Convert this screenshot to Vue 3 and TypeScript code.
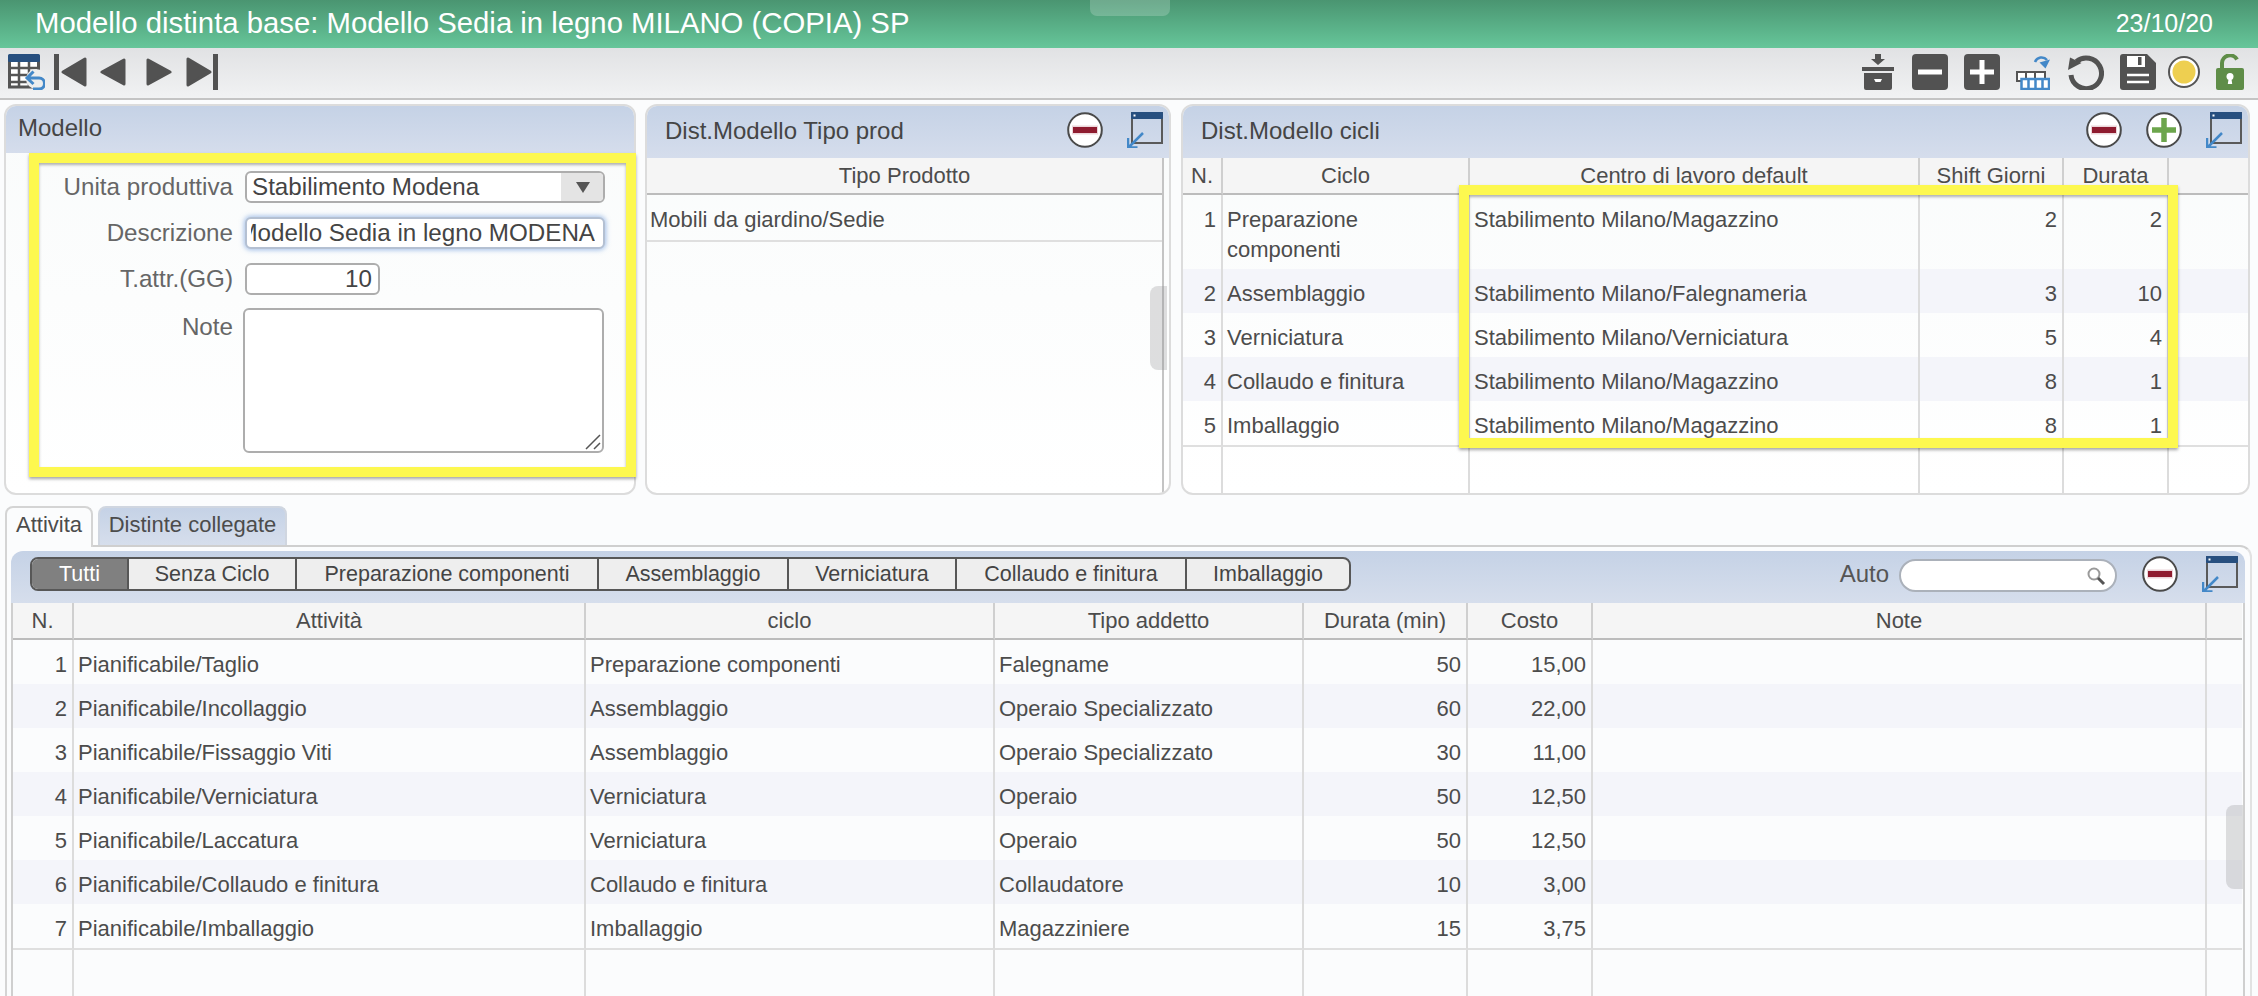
<template>
  <div class="page">
    <svg class="defs" width="0" height="0">
      <symbol id="minus-round" viewBox="0 0 36 36">
        <circle cx="18" cy="18" r="16.8" fill="#fff" stroke="#4a4a4a" stroke-width="2" />
        <rect x="5" y="13.500" width="26" height="9" fill="#ecd6da" />
        <rect x="6" y="15" width="24" height="6" fill="#8e1b2f" />
      </symbol>
      <symbol id="plus-round" viewBox="0 0 36 36">
        <circle cx="18" cy="18" r="16.8" fill="#fff" stroke="#4a4a4a" stroke-width="2" />
        <path d="M18 6v24M6 18h24" stroke="#6ca54c" stroke-width="5.500" fill="none" />
      </symbol>
      <symbol id="window" viewBox="0 0 36 36">
        <rect x="5" y="1" width="30" height="30" fill="none" stroke="#5a5a5a" stroke-width="2" />
        <rect x="4" y="0" width="32" height="7" rx="1" fill="#274f7f" />
        <rect x="6.500" y="2.500" width="2" height="2" fill="#fff" />
        <path d="M16 21 2 35M1 26v9.500h9.500" fill="none" stroke="#4388c8" stroke-width="2.500" />
      </symbol>
    </svg>

    <header class="titlebar">
      <span class="title">Modello distinta base: Modello Sedia in legno MILANO (COPIA) SP</span>
      <span class="date">23/10/20</span>
      <i class="handle"></i>
    </header>

    <nav class="toolbar">
      <svg class="ic-grid" width="37" height="36" viewBox="0 0 37 36">
        <rect x="1.500" y="3" width="29" height="30" fill="#fff" stroke="#555" stroke-width="3" />
        <path d="M1 14h30M1 21h30M1 28h30M11 7v26M21 7v26" stroke="#555" stroke-width="2.500" />
        <rect width="32" height="8" rx="1.500" fill="#274f7f" />
        <circle cx="28" cy="25" r="10" fill="#eceded" />
        <path d="M19 24h12a5.500 5.500 0 0 1 0 11h-6M25.500 17.500 19 24l6.500 6" fill="none" stroke="#4388c8" stroke-width="3" />
      </svg>
      <svg width="33" height="36" viewBox="0 0 33 36" class="ic-first"><rect width="5" height="36" fill="#525252" /><path d="M9 18 31 5v26z" fill="#525252" stroke="#525252" stroke-width="3" stroke-linejoin="round" /></svg>
      <svg width="26" height="30" viewBox="0 0 26 30" class="ic-prev"><path d="M2 15 24 3v24z" fill="#525252" stroke="#525252" stroke-width="3" stroke-linejoin="round" /></svg>
      <svg width="26" height="30" viewBox="0 0 26 30" class="ic-next"><path d="M24 15 2 3v24z" fill="#525252" stroke="#525252" stroke-width="3" stroke-linejoin="round" /></svg>
      <svg width="33" height="36" viewBox="0 0 33 36"><rect x="27" width="5" height="36" fill="#525252" /><path d="M24 18 2 5v26z" fill="#525252" stroke="#525252" stroke-width="3" stroke-linejoin="round" /></svg>

      <div class="tools">
        <svg class="wide-gap" width="32" height="36" viewBox="0 0 32 36">
          <path d="M13 0h6v5h4l-7 6-7-6h4z" fill="#525252" />
          <rect y="13" width="32" height="4" fill="#525252" />
          <path d="M2 19h28v15a2 2 0 0 1-2 2H4a2 2 0 0 1-2-2z" fill="#525252" />
          <path d="M12 25h8l-1.500 3h-5z" fill="#fff" />
        </svg>
        <svg width="36" height="36" viewBox="0 0 36 36"><rect width="36" height="36" rx="4" fill="#525252" /><rect x="6" y="15.500" width="24" height="5" fill="#fff" /></svg>
        <svg width="36" height="36" viewBox="0 0 36 36"><rect width="36" height="36" rx="4" fill="#525252" /><path d="M18 6v24M6 18h24" stroke="#fff" stroke-width="5" /></svg>
        <svg class="wide-gap" width="34" height="36" viewBox="0 0 34 36">
          <path d="M19 8A7 7 0 0 1 31 6" fill="none" stroke="#4388c8" stroke-width="2.500" />
          <path d="M23.500 8.500 34 5.500 29.500 14.500z" fill="#4388c8" />
          <rect x="1" y="18" width="28" height="9" fill="#fff" stroke="#555" stroke-width="2" />
          <path d="M10 18v9M19 18v9" stroke="#555" stroke-width="2" />
          <rect x="5.500" y="25" width="27.500" height="10" fill="#fff" stroke="#4388c8" stroke-width="2.500" />
          <path d="M12.500 25v10M19.500 25v10M26.500 25v10" stroke="#4388c8" stroke-width="2.500" />
        </svg>
        <svg width="36" height="36" viewBox="0 0 36 36">
          <path d="M8.500 7.500A15.300 15.300 0 1 1 3 21" fill="none" stroke="#525252" stroke-width="5" />
          <path d="M0 16 2 3.500 13.500 9z" fill="#525252" />
        </svg>
        <svg class="narrow-gap" width="36" height="36" viewBox="0 0 36 36">
          <path d="M3 0h24l9 9v24a3 3 0 0 1-3 3H3a3 3 0 0 1-3-3V3a3 3 0 0 1 3-3z" fill="#525252" />
          <rect x="7" y="2" width="18" height="11" fill="#fff" />
          <rect x="18" y="3" width="3.500" height="8" fill="#525252" />
          <path d="M7 21h22M7 28h22" stroke="#fff" stroke-width="2.500" />
        </svg>
        <svg width="32" height="36" viewBox="0 0 32 36">
          <circle cx="16" cy="18" r="15" fill="#fff" stroke="#555" stroke-width="2" />
          <circle cx="16" cy="18" r="11.500" fill="#eecf50" />
        </svg>
        <svg width="28" height="36" viewBox="0 0 28 36">
          <path d="M6 14V9a8 8 0 0 1 15-3.500" fill="none" stroke="#5f8d48" stroke-width="4" />
          <rect y="14" width="28" height="22" rx="2" fill="#5f8d48" />
          <circle cx="14" cy="22.500" r="3.500" fill="#fff" />
          <path d="M12.800 23h2.400l1 7h-4.400z" fill="#fff" />
        </svg>
      </div>
    </nav>

    <section class="top-row">
      <div class="panel">
        <div class="panel-head short"><span>Modello</span></div>
        <form class="form" @submit.prevent>
          <label>Unita produttiva</label>
          <div class="field select"><span>Stabilimento Modena</span><i class="select-btn"></i></div>
          <label>Descrizione</label>
          <div class="field focused"><div class="scrolled"><span>Modello Sedia in legno MODENA</span></div></div>
          <label>T.attr.(GG)</label>
          <div class="field number">10</div>
          <label class="note-label">Note</label>
          <div class="note-box">
            <textarea class="note"></textarea>
            <svg class="grip" width="16" height="16" viewBox="0 0 16 16">
              <path d="M1 15 15 1M9 15l6-6" stroke="#555" stroke-width="1.500" />
            </svg>
          </div>
        </form>
      </div>

      <div class="panel">
        <div class="panel-head">
          <span>Dist.Modello Tipo prod</span>
          <div class="head-icons">
            <svg width="36" height="36"><use href="#minus-round" /></svg>
            <svg width="36" height="36"><use href="#window" /></svg>
          </div>
        </div>
        <div class="tbl-wrap single">
          <table class="grid">
            <colgroup><col style="width: 515px" /></colgroup>
            <thead><tr><th>Tipo Prodotto</th></tr></thead>
            <tbody>
              <tr class="sep"><td class="cell-pad">Mobili da giardino/Sedie</td></tr>
            </tbody>
          </table>
          <i class="thumb mid"></i>
        </div>
      </div>

      <div class="panel cycles">
        <div class="panel-head">
          <span>Dist.Modello cicli</span>
          <div class="head-icons">
            <svg width="36" height="36"><use href="#minus-round" /></svg>
            <svg width="36" height="36"><use href="#plus-round" /></svg>
            <svg width="36" height="36"><use href="#window" /></svg>
          </div>
        </div>
        <div class="tbl-wrap">
          <table class="grid">
            <colgroup><col v-for="(w, i) in cycleCols" :key="i" :style="{ width: w + 'px' }" /></colgroup>
            <thead>
              <tr><th>N.</th><th>Ciclo</th><th>Centro di lavoro default</th><th>Shift Giorni</th><th>Durata</th><th></th></tr>
            </thead>
            <tbody>
              <tr v-for="(row, i) in cycles" :key="row.n" :class="{ alt: i % 2 === 1, sep: i === cycles.length - 1 }">
                <td class="num">{{ row.n }}</td>
                <td>{{ row.name }}</td>
                <td>{{ row.center }}</td>
                <td class="num">{{ row.shift }}</td>
                <td class="num">{{ row.days }}</td>
                <td></td>
              </tr>
              <tr class="filler"><td v-for="(w, i) in cycleCols" :key="i"></td></tr>
            </tbody>
          </table>
        </div>
      </div>
    </section>

    <section class="tabs">
      <div class="tab active">Attivita</div>
      <div class="tab">Distinte collegate</div>
    </section>

    <section class="tab-body">
      <div class="sub-head">
        <div class="segments">
          <button v-for="(s, i) in segments" :key="s" :class="{ on: i === 0 }">{{ s }}</button>
        </div>
        <span class="auto">Auto</span>
        <div class="search">
          <svg width="20" height="20" viewBox="0 0 20 20">
            <circle cx="8" cy="8" r="5.500" fill="#fff" stroke="#9a9a9a" stroke-width="2" />
            <path d="m12 12 6 6" stroke="#555" stroke-width="3" />
          </svg>
        </div>
        <svg class="sub-minus" width="36" height="36"><use href="#minus-round" /></svg>
        <svg class="sub-window" width="36" height="36"><use href="#window" /></svg>
      </div>
      <div class="sub-body">
        <table class="grid">
          <colgroup><col v-for="(w, i) in taskCols" :key="i" :style="{ width: w + 'px' }" /></colgroup>
          <thead>
            <tr><th>N.</th><th>Attività</th><th>ciclo</th><th>Tipo addetto</th><th>Durata (min)</th><th>Costo</th><th>Note</th><th></th></tr>
          </thead>
          <tbody>
            <tr v-for="(row, i) in tasks" :key="row.n" :class="{ alt: i % 2 === 1, sep: i === tasks.length - 1 }">
              <td class="num">{{ row.n }}</td>
              <td>{{ row.task }}</td>
              <td>{{ row.cycle }}</td>
              <td>{{ row.worker }}</td>
              <td class="num">{{ row.mins }}</td>
              <td class="num">{{ row.cost }}</td>
              <td></td>
              <td></td>
            </tr>
            <tr class="filler"><td v-for="(w, i) in taskCols" :key="i"></td></tr>
          </tbody>
        </table>
        <i class="thumb low"></i>
      </div>
    </section>

    <!-- evidenziazioni gialle sopra lo screenshot -->
    <div class="mark form-mark"></div>
    <div class="mark cycle-mark"></div>
  </div>
</template>

<script setup lang="ts">
interface CycleRow {
  n: number;
  name: string;
  center: string;
  shift: number;
  days: number;
}

interface TaskRow {
  n: number;
  task: string;
  cycle: string;
  worker: string;
  mins: number;
  cost: string;
}

const cycleCols = [40, 247, 450, 144, 105, 79];
const taskCols = [61, 512, 409, 309, 164, 125, 614, 35];

const cycles: CycleRow[] = [
  { n: 1, name: "Preparazione componenti", center: "Stabilimento Milano/Magazzino", shift: 2, days: 2 },
  { n: 2, name: "Assemblaggio", center: "Stabilimento Milano/Falegnameria", shift: 3, days: 10 },
  { n: 3, name: "Verniciatura", center: "Stabilimento Milano/Verniciatura", shift: 5, days: 4 },
  { n: 4, name: "Collaudo e finitura", center: "Stabilimento Milano/Magazzino", shift: 8, days: 1 },
  { n: 5, name: "Imballaggio", center: "Stabilimento Milano/Magazzino", shift: 8, days: 1 }
];

const segments = [
  "Tutti",
  "Senza Ciclo",
  "Preparazione componenti",
  "Assemblaggio",
  "Verniciatura",
  "Collaudo e finitura",
  "Imballaggio"
];

const tasks: TaskRow[] = [
  { n: 1, task: "Pianificabile/Taglio", cycle: "Preparazione componenti", worker: "Falegname", mins: 50, cost: "15,00" },
  { n: 2, task: "Pianificabile/Incollaggio", cycle: "Assemblaggio", worker: "Operaio Specializzato", mins: 60, cost: "22,00" },
  { n: 3, task: "Pianificabile/Fissaggio Viti", cycle: "Assemblaggio", worker: "Operaio Specializzato", mins: 30, cost: "11,00" },
  { n: 4, task: "Pianificabile/Verniciatura", cycle: "Verniciatura", worker: "Operaio", mins: 50, cost: "12,50" },
  { n: 5, task: "Pianificabile/Laccatura", cycle: "Verniciatura", worker: "Operaio", mins: 50, cost: "12,50" },
  { n: 6, task: "Pianificabile/Collaudo e finitura", cycle: "Collaudo e finitura", worker: "Collaudatore", mins: 10, cost: "3,00" },
  { n: 7, task: "Pianificabile/Imballaggio", cycle: "Imballaggio", worker: "Magazziniere", mins: 15, cost: "3,75" }
];
</script>

<style>
html,
body {
  margin: 0;
  background: #fbfcfd;
}
</style>

<style scoped>
.page {
  position: relative;
  width: 2258px;
  height: 996px;
  overflow: hidden;
  display: flex;
  flex-direction: column;
  background: #fbfcfd;
  color: #4c4c4c;
  font-family: "Liberation Sans", Arial, sans-serif;
  font-size: 22px;
}
.defs {
  position: absolute;
}

.titlebar {
  position: relative;
  flex: none;
  height: 48px;
  display: flex;
  align-items: center;
  justify-content: space-between;
  padding: 0 45px 2px 35px;
  box-sizing: border-box;
  color: #fff;
  background: linear-gradient(#4a9571, #66c69a);
}
.title {
  font-size: 29.300px;
}
.date {
  font-size: 25px;
}
.handle {
  position: absolute;
  left: 1090px;
  top: 0;
  width: 80px;
  height: 16px;
  border-radius: 0 0 7px 7px;
  background: rgba(255, 255, 255, 0.2);
}

.toolbar {
  flex: none;
  height: 52px;
  box-sizing: border-box;
  display: flex;
  align-items: center;
  padding: 0 14px 2px 8px;
  border-bottom: 2px solid #c4c4c4;
  background: linear-gradient(#e1e2e4, #f1f2f3);
}
.ic-grid {
  margin-right: 9px;
}
.ic-first {
  margin-right: 13px;
}
.ic-prev {
  margin-right: 20px;
}
.ic-next {
  margin-right: 14px;
}
.tools {
  margin-left: auto;
  display: flex;
  align-items: center;
  gap: 16px;
}
.tools .wide-gap {
  margin-right: 2px;
}
.tools .narrow-gap {
  margin-right: -4px;
}

.top-row {
  flex: none;
  display: grid;
  grid-template-columns: 632px 526px 1070px;
  column-gap: 9px;
  height: 391px;
  margin: 4px 0 0 4px;
}
.cycles {
  margin-left: 1px;
}
.panel {
  box-sizing: border-box;
  border: 2px solid #dcdcdc;
  border-radius: 12px;
  overflow: hidden;
  display: flex;
  flex-direction: column;
  background: linear-gradient(#f9fbfb, #ffffff);
}
.panel-head {
  flex: none;
  height: 52px;
  box-sizing: border-box;
  display: flex;
  align-items: center;
  padding: 0 6px 3px 18px;
  font-size: 24px;
  background: linear-gradient(#c5d2e6, #d5ddec);
  color: #454545;
}
.panel-head.short {
  height: 47px;
  padding-left: 12px;
}
.head-icons {
  margin-left: auto;
  display: flex;
  gap: 24px;
  padding-bottom: 2px;
}

.form {
  display: grid;
  grid-template-columns: 227px 360px;
  column-gap: 12px;
  row-gap: 14px;
  grid-template-rows: 32px 32px 32px auto;
  padding-top: 18px;
  font-size: 24.200px;
}
.form label {
  text-align: right;
  line-height: 32px;
  color: #666;
}
.form .note-label {
  padding-top: 2px;
}
.field {
  position: relative;
  box-sizing: border-box;
  height: 32px;
  line-height: 28px;
  border: 2px solid #adadad;
  border-radius: 6px;
  background: #fff;
  padding: 0 6px 0 5px;
  color: #444;
}
.select {
  display: flex;
  justify-content: space-between;
  overflow: hidden;
}
.select-btn {
  position: absolute;
  right: 0;
  top: 0;
  bottom: 0;
  width: 42px;
  background: #e4e4e4;
}
.select-btn::after {
  content: "";
  position: absolute;
  left: 15px;
  top: 9px;
  border-left: 7px solid transparent;
  border-right: 7px solid transparent;
  border-top: 11px solid #555;
}
.focused {
  padding: 0 8px 0 4px;
  border-color: #b4c0d2;
  box-shadow: 0 0 5px 1px rgba(90, 140, 215, 0.55);
}
.scrolled {
  overflow: hidden;
  display: flex;
  justify-content: flex-end;
  white-space: nowrap;
}
.number {
  width: 135px;
  text-align: right;
}
.note-box {
  position: relative;
  width: 361px;
  height: 145px;
  margin: -1px 0 0 -2px;
}
.note {
  display: block;
  box-sizing: border-box;
  width: 100%;
  height: 100%;
  border: 2px solid #adadad;
  border-radius: 6px;
  background: #fff;
  outline: none;
  resize: none;
}
.grip {
  position: absolute;
  right: 3px;
  bottom: 3px;
}

.tbl-wrap {
  position: relative;
  flex: 1;
  min-height: 0;
}
.tbl-wrap.single {
  width: 515px;
  border-right: 2px solid #c4c4c4;
}
.grid {
  table-layout: fixed;
  border-collapse: separate;
  border-spacing: 0;
  width: 0;
  color: #4c4c4c;
}
.grid th {
  height: 35px;
  padding: 0;
  font-weight: normal;
  line-height: 34px;
  background: #f5f5f5;
  border-right: 2px solid #cfcfcf;
  border-bottom: 2px solid #bcbcbc;
}
.grid td {
  box-sizing: border-box;
  padding: 10px 5px 4px 4px;
  line-height: 30px;
  vertical-align: top;
  border-right: 2px solid #dcdcdc;
  overflow: hidden;
  white-space: normal;
}
.grid th:last-child,
.grid td:last-child {
  border-right: none;
}
.single .grid th,
.single .grid td {
  border-right: none;
}
.grid .num {
  text-align: right;
}
.grid tr.alt td {
  background: #f4f5fa;
}
.grid tr.sep td {
  border-bottom: 2px solid #dfdfdf;
}
.grid tr.filler td {
  height: 60px;
  padding: 0;
}
.grid .cell-pad {
  padding-left: 3px;
  padding-bottom: 5px;
}

.thumb {
  position: absolute;
  width: 17px;
  height: 84px;
  border-radius: 8px 0 0 8px;
  background: rgba(140, 140, 145, 0.28);
}
.thumb.mid {
  right: -5px;
  top: 128px;
}
.thumb.low {
  right: 0;
  top: 202px;
}

.tabs {
  flex: none;
  display: flex;
  gap: 5px;
  height: 39px;
  margin: 11px 0 0 5px;
}
.tab {
  box-sizing: border-box;
  height: 39px;
  padding: 0;
  line-height: 34px;
  width: 189px;
  text-align: center;
  white-space: nowrap;
  border-radius: 8px 8px 0 0;
  background: linear-gradient(#c5d2e6, #d6deec);
  border: 2px solid #d0d6e0;
  border-bottom: none;
}
.tab.active {
  width: 88px;
  background: #fbfcfd;
  border-color: #d4d4d4;
  position: relative;
  height: 41px;
  z-index: 1;
}

.tab-body {
  flex: 1;
  width: 2247px;
  margin-left: 5px;
  box-sizing: border-box;
  border-top: 2px solid #cfcfcf;
  border-left: 2px solid #d4d4d4;
  border-right: 2px solid #e2e2e2;
  border-radius: 0 12px 0 0;
  padding: 4px 5px 0 4px;
  min-height: 0;
}
.sub-head {
  height: 52px;
  display: flex;
  align-items: center;
  padding: 0 7px 6px 19px;
  box-sizing: border-box;
  border-radius: 12px 12px 0 0;
  background: linear-gradient(#c5d2e6, #d6deec);
}
.segments {
  display: grid;
  grid-template-columns: 97px 168px 302px 190px 168px 230px 162px;
  height: 34px;
  box-sizing: border-box;
  border: 2px solid #575757;
  border-radius: 8px;
  overflow: hidden;
  background: #eee;
}
.segments button {
  padding: 0;
  border: none;
  border-right: 2px solid #575757;
  background: transparent;
  font: 21.500px "Liberation Sans", Arial, sans-serif;
  color: #444;
}
.segments button:last-child {
  border-right: none;
}
.segments button.on {
  background: #808080;
  color: #fff;
}
.auto {
  margin-left: auto;
  font-size: 24px;
  color: #555;
}
.search {
  box-sizing: border-box;
  width: 218px;
  height: 33px;
  margin: 0 0 -3px 10px;
  border: 2px solid #abb1ba;
  border-radius: 17px;
  background: #fff;
  display: flex;
  justify-content: flex-end;
  align-items: center;
  padding-right: 9px;
}
.sub-minus {
  margin-left: 25px;
}
.sub-window {
  margin-left: 24px;
}
.sub-body {
  position: relative;
  height: 400px;
  border-left: 2px solid #cfcfcf;
  border-right: 2px solid #cfcfcf;
  padding-right: 3px;
}

.mark {
  position: absolute;
  box-sizing: border-box;
  border: 10px solid #fdf84f;
  box-shadow: 0 2px 3px rgba(0, 0, 0, 0.35), inset 0 2px 3px rgba(0, 0, 0, 0.3);
  pointer-events: none;
}
.form-mark {
  left: 29px;
  top: 153px;
  width: 607px;
  height: 324px;
}
.cycle-mark {
  left: 1459px;
  top: 185px;
  width: 719px;
  height: 263px;
}
</style>
